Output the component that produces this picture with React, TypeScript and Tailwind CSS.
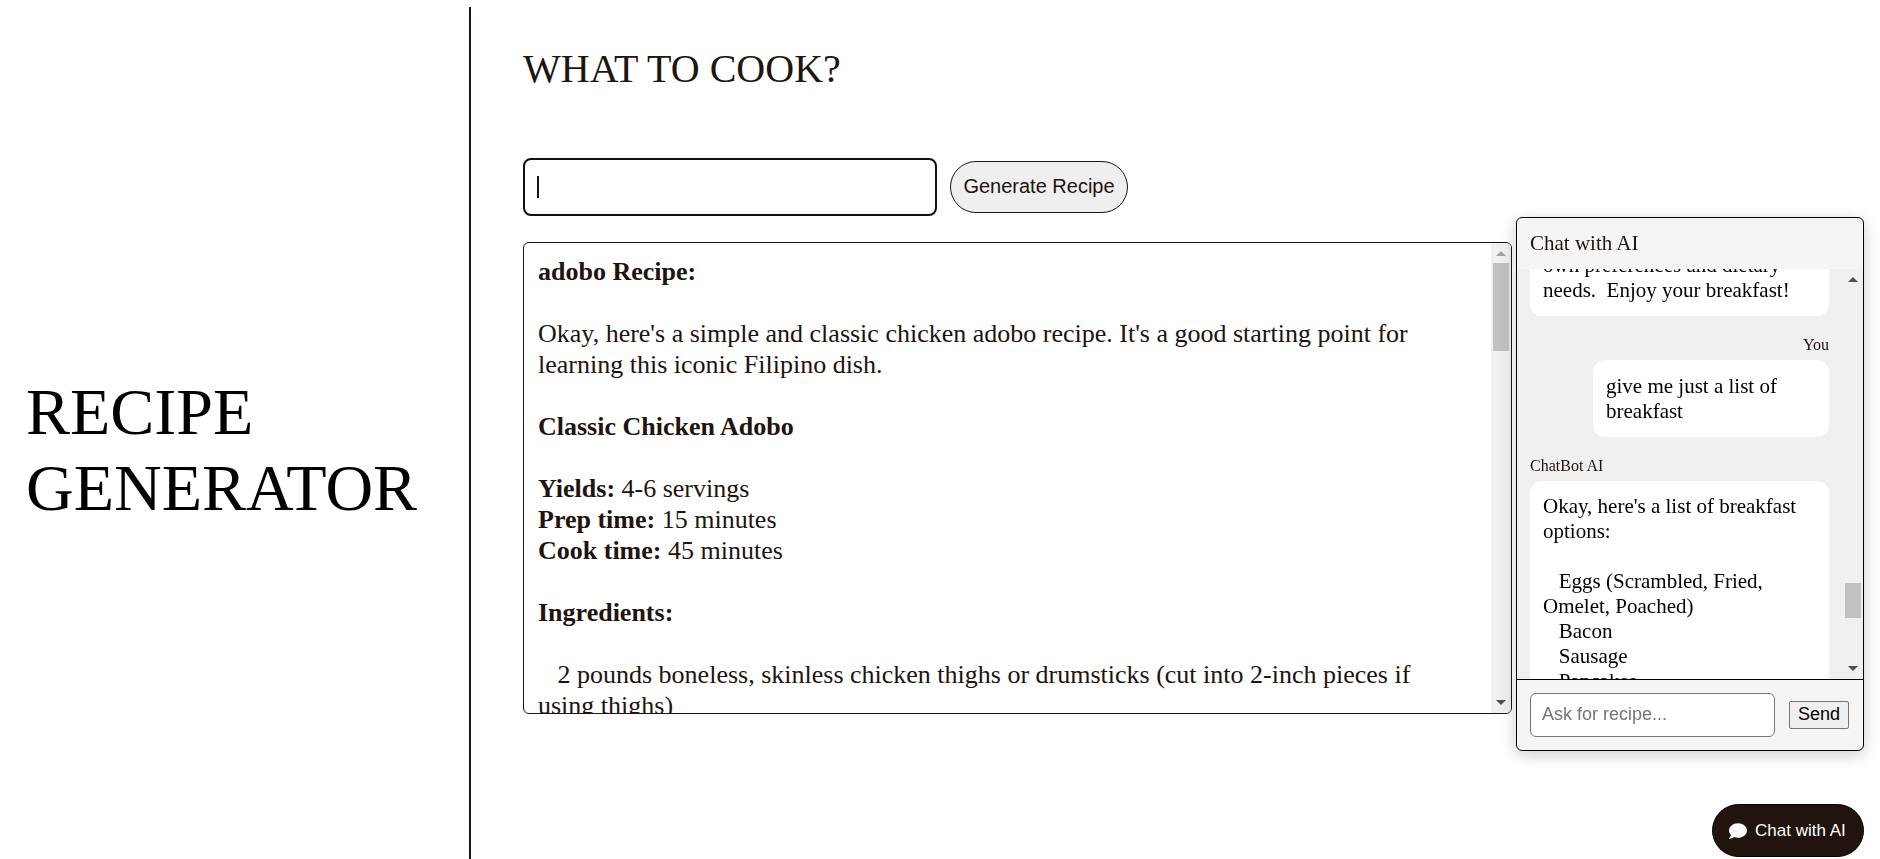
import { useLayoutEffect, useRef } from "react";

const serif = "font-['Liberation_Serif','Times_New_Roman',serif]";
const sans = "font-['Liberation_Sans',Arial,sans-serif]";

function Arrow({ up = false, muted = false }: { up?: boolean; muted?: boolean }) {
  return (
    <svg viewBox="0 0 10 5" className="h-[5px] w-[10px] shrink-0" aria-hidden="true">
      <path d={up ? "M0 5L5 0L10 5Z" : "M0 0L5 5L10 0Z"} fill={muted ? "#a3a3a3" : "#505050"} />
    </svg>
  );
}

function ScrollTrack({ thumb, mutedTop = false }: { thumb: string; mutedTop?: boolean }) {
  return (
    <div className="flex w-5 shrink-0 flex-col items-center bg-[#f0f0f0] py-2" aria-hidden="true">
      <Arrow up muted={mutedTop} />
      <div className="flex w-full flex-1 flex-col items-center">
        <div className={"w-4 bg-[#c1c1c1] " + thumb} />
      </div>
      <Arrow />
    </div>
  );
}

function Recipe() {
  return (
    <section className="mt-[26px] flex h-[472px] w-full max-w-[989px] overflow-hidden rounded-md border border-[#21130d]">
      <div className="min-w-0 flex-1 overflow-hidden whitespace-pre-wrap pt-[13px] pr-10 pl-[14px] text-[26px] leading-[31px]">
        <p><b>adobo Recipe:</b></p>
        <p className="mt-[31px]">Okay, here's a simple and classic chicken adobo recipe. It's a good starting point for learning this iconic Filipino dish.</p>
        <p className="mt-[31px]"><b>Classic Chicken Adobo</b></p>
        <p className="mt-[31px]"><b>Yields:</b> 4-6 servings</p>
        <p><b>Prep time:</b> 15 minutes</p>
        <p><b>Cook time:</b> 45 minutes</p>
        <p className="mt-[31px]"><b>Ingredients:</b></p>
        <p className="mt-[31px]">{"   2 pounds boneless, skinless chicken thighs or drumsticks (cut into 2-inch pieces if using thighs)"}</p>
      </div>
      <ScrollTrack mutedTop thumb="mt-[7px] h-[88px]" />
    </section>
  );
}

function Bubble({ text, className = "pt-[14px] pb-[13px]" }: { text: string; className?: string }) {
  return (
    <p className={"whitespace-pre-wrap rounded-xl bg-white pr-3 pl-[13px] text-[21px] leading-[25px] text-black " + className}>
      {text}
    </p>
  );
}

function ChatPanel() {
  const log = useRef<HTMLDivElement>(null);
  useLayoutEffect(() => {
    if (log.current) log.current.scrollTop = 30;
  }, []);
  return (
    <aside className="fixed right-4 bottom-[108px] flex h-[534px] w-[348px] flex-col overflow-hidden rounded-md border border-black bg-[#f5f5f5] shadow-[0_4px_16px_rgba(0,0,0,0.2)]">
      <h2 className="px-[13px] pt-[13px] pb-[14px] text-[21px] leading-[24px]">Chat with AI</h2>
      <div className="flex min-h-0 flex-1 bg-[#f0f0f0]">
        <div ref={log} className="flex min-w-0 flex-1 flex-col overflow-hidden pr-[14px] pl-[13px]">
          <Bubble text={"own preferences and dietary needs.  Enjoy your breakfast!"} />
          <span className="mt-5 mb-[6px] self-end text-[16px] leading-[18px]">You</span>
          <Bubble text="give me just a list of breakfast" className="w-[236px] self-end pt-[14px] pb-[13px]" />
          <span className="mt-5 mb-[6px] text-[16px] leading-[18px]">ChatBot AI</span>
          <Bubble
            className="pt-[13px] pb-12"
            text={"Okay, here's a list of breakfast options:\n\n   Eggs (Scrambled, Fried, Omelet, Poached)\n   Bacon\n   Sausage\n   Pancakes"}
          />
        </div>
        <ScrollTrack thumb="mt-[301px] h-[35px]" />
      </div>
      <form className="flex items-center gap-[14px] border-t border-black py-[13px] pr-[14px] pl-[13px]" onSubmit={(e) => e.preventDefault()}>
        <input
          aria-label="Ask for recipe"
          placeholder="Ask for recipe..."
          className={"h-11 min-w-0 flex-1 rounded-md border border-[#767676] bg-white px-[11px] pb-[2px] text-[18px] placeholder:text-[#757575] " + sans}
        />
        <button className={"h-7 w-[60px] rounded-[2px] border border-[#767676] bg-[#efefef] pb-[2px] text-[18px] leading-6 text-black " + sans}>Send</button>
      </form>
    </aside>
  );
}

export default function App() {
  return (
    <div className={"flex min-h-screen pt-[7px] text-[#21130d] " + serif}>
      <header className="flex w-1/4 max-w-[469px] shrink-0 items-center pt-[34px] pl-[26px]">
        <h1 className="text-[66px] leading-[76px] text-black">RECIPE GENERATOR</h1>
      </header>
      <main className="flex min-w-0 flex-1 flex-col border-l-2 border-[#21130d] px-[52px] pt-[39px]">
        <h2 className="text-[40px] leading-[46px]">WHAT TO COOK?</h2>
        <form className="mt-[66px] flex items-center gap-[13px]" onSubmit={(e) => e.preventDefault()}>
          <div className="relative flex w-[414px]">
            <input
              aria-label="Dish name"
              className={"h-[58px] w-full rounded-lg border-2 border-[#101010] px-3 text-[20px] caret-transparent outline-none " + sans}
            />
            <span className="absolute top-[18px] left-[14px] h-[22px] w-[2px] bg-[#21130d]" aria-hidden="true" />
          </div>
          <button className={"h-[52px] w-[178px] rounded-full border border-[#21130d] bg-[#efefef] pb-[2px] text-[20px] whitespace-nowrap " + sans}>Generate Recipe</button>
        </form>
        <Recipe />
      </main>
      <ChatPanel />
      <button className={"fixed right-4 bottom-[2px] flex h-[53px] w-[152px] items-center gap-2 rounded-full border border-black bg-[#21130d] pl-4 text-[17px] whitespace-nowrap text-white " + sans}>
        <svg viewBox="0 0 512 512" className="h-[18px] w-[18px] shrink-0" fill="currentColor" aria-hidden="true">
          <path d="M256 32C114.600 32 0 125.100 0 240c0 49.600 21.400 95 57 130.700C44.500 421.100 2.700 466 2.200 466.500c-2.200 2.300-2.800 5.700-1.500 8.700S4.800 480 8 480c66.300 0 116-31.800 140.600-51.400C181.300 440.900 217.600 448 256 448c141.400 0 256-93.100 256-208S397.400 32 256 32z" />
        </svg>
        Chat with AI
      </button>
    </div>
  );
}
